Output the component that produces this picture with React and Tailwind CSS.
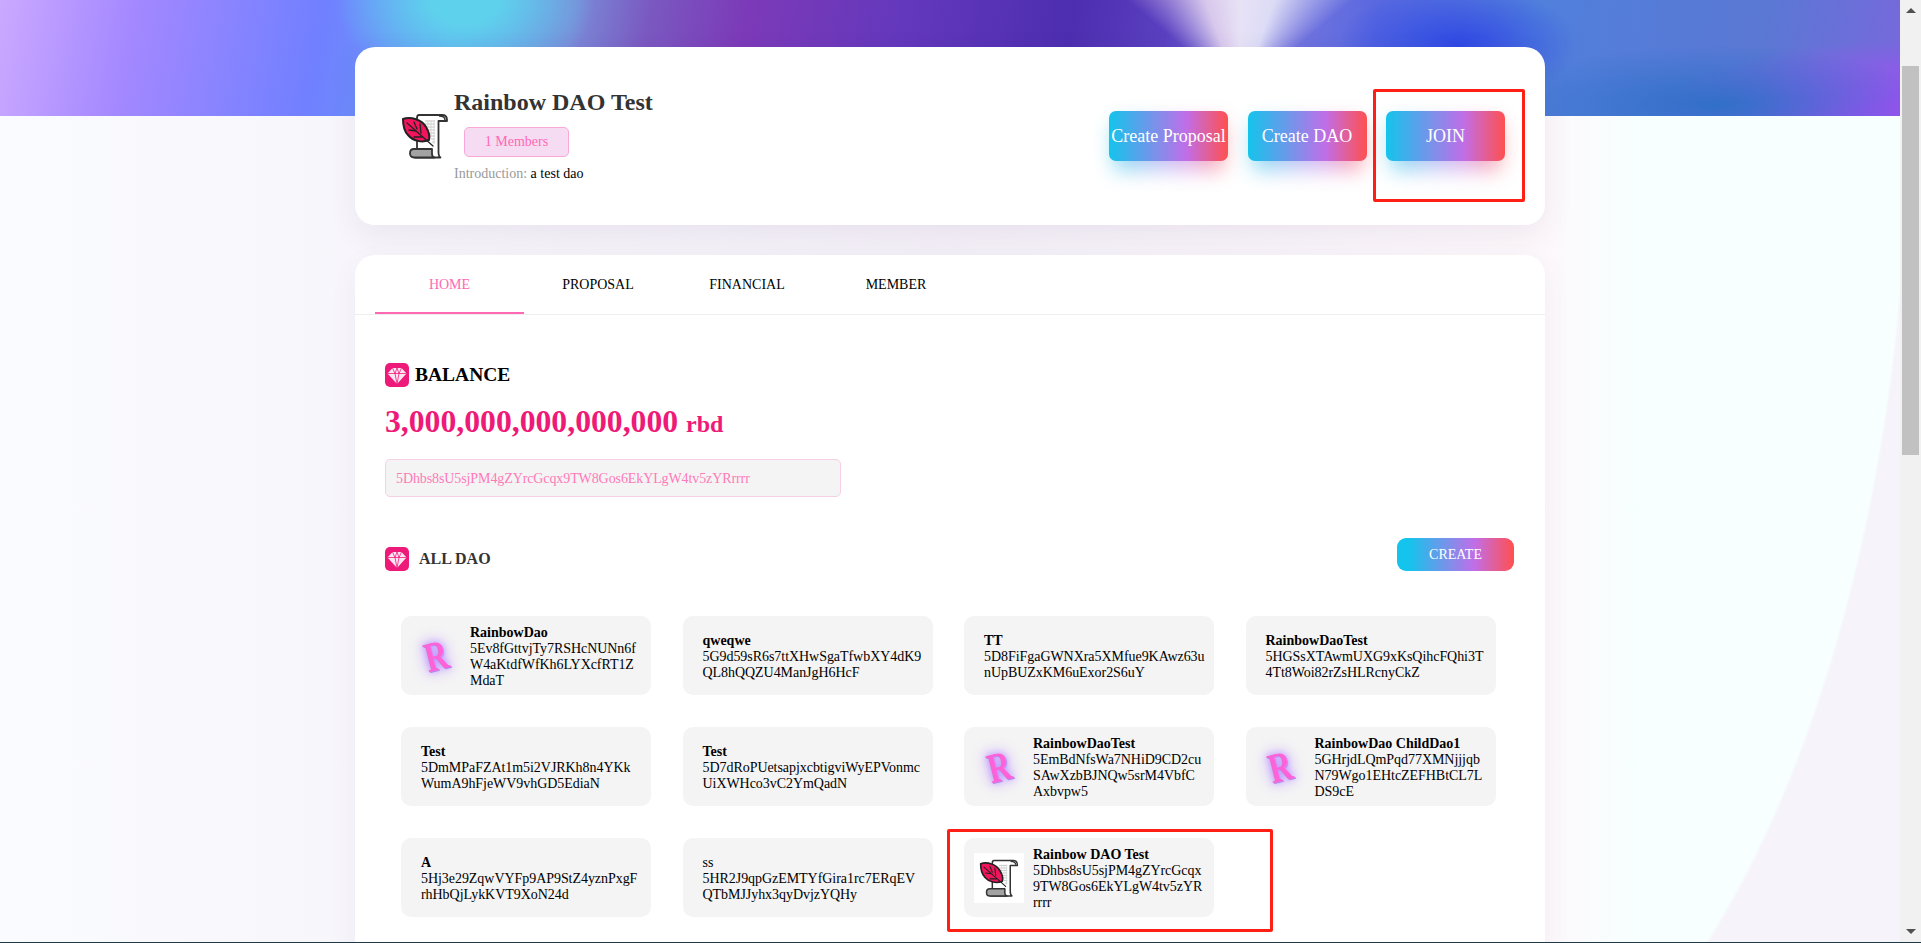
const serif = "font-['Liberation_Serif','Times_New_Roman',serif]";

function Feather({ className }) {
  return (
    <svg viewBox="0 0 60 60" className={className}>
      <path d="M24 9H47c3 0 5 2 5 5v1h-8.500V46c0 3 1 5 2 5.500H20V43h2V12c0-2 1-3 2-3z" fill="#fff" stroke="#333" strokeWidth="1.800" strokeLinejoin="round" />
      <path d="M44 10c3 0 6 1 6 4" fill="none" stroke="#333" strokeWidth="1.500" />
      <path d="M19 43H37v5c0 2 1 3 2.500 3.500H19c-2.500 0-4-1.800-4-4.200S16.500 43 19 43z" fill="#a3a3a3" stroke="#333" strokeWidth="1.800" strokeLinejoin="round" />
      <g stroke="#bdbdbd" strokeWidth="0.900">
        <path d="M30 15h10M29 18h11M31 21h9M32 24h8M33 27h7M34 30h6M36 33h4M37 36h3" />
        <path d="M33 14v8M36 14v16M39 14v24" stroke="#d5d5d5" />
      </g>
      <path d="M8 13C16 10 27 14 31 21c3 5 4 10 3 13-7 3-16 1-21-5-4-4-5-10-5-16z" fill="#f2145c" stroke="#222" strokeWidth="2" strokeLinejoin="round" />
      <path d="M12 17 38 40M19 16l3 7M25 18l1 9M14 24l7 1M19 31l8 0" fill="none" stroke="#222" strokeWidth="1.300" strokeLinecap="round" />
    </svg>
  );
}

function Gem({ className }) {
  return (
    <span className={`flex items-center justify-center rounded-[5px] bg-[#ee1a7a] ${className}`}>
      <svg viewBox="0 0 24 24" className="h-full w-full">
        <path d="M7.500 5h9l5 5.500L12 21 2.500 10.500z" fill="#fde6f1" />
        <path d="M2.500 10.500h19M7.500 5l2.500 5.500 2 10.500 2-10.500 2.500-5.500M10 10.500l2-5.500 2 5.500" fill="none" stroke="#ee1a7a" strokeWidth="0.800" />
      </svg>
    </span>
  );
}

function RainbowR() {
  return (
    <span className="flex h-[50px] w-[50px] shrink-0 items-center justify-center">
      <span className={`-rotate-[14deg] scale-x-75 text-[42px] font-bold leading-none text-[#ff62d6] ${serif} [text-shadow:0_0_8px_#b48aff,0_0_16px_#c9a5ff,0_0_22px_#d8c2ff,1px_1px_0_#a86ee8]`}>R</span>
    </span>
  );
}

function GradientButton({ children }) {
  return (
    <button className="relative block h-[50px] w-[119px] rounded-[7px] text-[18px] text-white">
      <span className="absolute inset-x-[4px] bottom-[-10px] top-[10px] rounded-[7px] bg-[linear-gradient(90deg,#14c4ec,#c06ee8_65%,#ff5050)] opacity-50 blur-[10px]" />
      <span className="absolute inset-0 flex items-center justify-center whitespace-nowrap rounded-[7px] bg-[linear-gradient(90deg,#14c4ec,#c06ee8_65%,#ff5050)]">{children}</span>
    </button>
  );
}

const daos = [
  { name: "RainbowDao", lines: ["5Ev8fGttvjTy7RSHcNUNn6f", "W4aKtdfWfKh6LYXcfRT1Z", "MdaT"], img: "r" },
  { name: "qweqwe", lines: ["5G9d59sR6s7ttXHwSgaTfwbXY4dK9", "QL8hQQZU4ManJgH6HcF"] },
  { name: "TT", lines: ["5D8FiFgaGWNXra5XMfue9KAwz63u", "nUpBUZxKM6uExor2S6uY"] },
  { name: "RainbowDaoTest", lines: ["5HGSsXTAwmUXG9xKsQihcFQhi3T", "4Tt8Woi82rZsHLRcnyCkZ"] },
  { name: "Test", lines: ["5DmMPaFZAt1m5i2VJRKh8n4YKk", "WumA9hFjeWV9vhGD5EdiaN"] },
  { name: "Test", lines: ["5D7dRoPUetsapjxcbtigviWyEPVonmc", "UiXWHco3vC2YmQadN"] },
  { name: "RainbowDaoTest", lines: ["5EmBdNfsWa7NHiD9CD2cu", "SAwXzbBJNQw5srM4VbfC", "Axbvpw5"], img: "r" },
  { name: "RainbowDao ChildDao1", lines: ["5GHrjdLQmPqd77XMNjjjqb", "N79Wgo1EHtcZEFHBtCL7L", "DS9cE"], img: "r" },
  { name: "A", lines: ["5Hj3e29ZqwVYFp9AP9StZ4yznPxgF", "rhHbQjLykKVT9XoN24d"] },
  { name: "ss", lines: ["5HR2J9qpGzEMTYfGira1rc7ERqEV", "QTbMJJyhx3qyDvjzYQHy"], thin: true },
  { name: "Rainbow DAO Test", lines: ["5Dhbs8sU5sjPM4gZYrcGcqx", "9TW8Gos6EkYLgW4tv5zYR", "rrrr"], img: "f", marked: true },
];

function DaoCard({ dao }) {
  return (
    <div className={`relative flex h-[79px] items-center rounded-[10px] bg-[#f4f4f4] text-[14px] leading-4 text-black ${dao.img ? "gap-[9px] pl-[10px] pr-[10px]" : "pl-[20px] pr-[10px]"}`}>
      {dao.img === "r" && <RainbowR />}
      {dao.img === "f" && (
        <span className="flex h-[50px] w-[50px] shrink-0 bg-white">
          <Feather className="h-[50px] w-[50px]" />
        </span>
      )}
      <div className="min-w-0 flex-1 whitespace-nowrap pt-[2px]">
        <div className={dao.thin ? "" : "font-bold"}>{dao.name}</div>
        {dao.lines.map((l) => <div key={l} className="tracking-[-0.05px]">{l}</div>)}
      </div>
      {dao.marked && <span className="absolute bottom-[-15px] left-[-17px] right-[-59px] top-[-9px] rounded-[2px] border-[3px] border-[#ff2015]" />}
    </div>
  );
}

export default function App() {
  return (
    <div className={`flex h-[943px] w-full flex-col overflow-hidden ${serif}`}>
      <div className="flex min-h-0 flex-1">
        <main className="min-w-0 flex-1 overflow-hidden bg-[linear-gradient(90deg,#fafbff_0px,#f6f3f9_570px,#f4f0f7_950px,#f8f3f9_1250px,#fdf8fb_1545px,transparent_1640px),radial-gradient(ellipse_510px_1059px_at_1400px_100px,#f7ffff_0%,#f7ffff_99.5%,transparent_100%),linear-gradient(90deg,#f6f4fa_0%,#f6f4fa_100%)]">
          <div className="h-[116px] bg-[conic-gradient(from_310deg_at_1240px_95px,transparent_0deg,#d8c8ec_30deg,#e8e2f6_50deg,#dcdcf6_70deg,transparent_100deg),radial-gradient(ellipse_120px_60px_at_1458px_45px,#2f48e4_0%,transparent_100%),radial-gradient(ellipse_220px_60px_at_1715px_105px,#3070c8_0%,transparent_100%),radial-gradient(ellipse_260px_85px_at_1905px_125px,#a04ff2_0%,#a04ff2_25%,transparent_100%),radial-gradient(ellipse_130px_90px_at_465px_0px,#5ed2ec_0%,#5ed2ec_25%,transparent_100%),linear-gradient(100deg,#cba9ff_0%,#a488ff_7%,#7080ff_17%,#68a0f4_24%,#7a8ad8_30%,#7a58c0_34%,#7c3ab8_39%,#6438bc_47%,#4d2eb0_56%,#5a40c0_61%,#7c78dc_66%,#5868e0_72%,#5080dc_80%,#5a78d4_92%,#7868dc_100%)]" />
          <div className="mx-auto -mt-[69px] w-[1190px]">
            <section className="flex h-[178px] items-center rounded-[20px] bg-white pl-[40px] pr-[40px] shadow-[0_10px_30px_rgba(80,50,120,0.08)]">
              <Feather className="h-[60px] w-[60px] shrink-0" />
              <div className="-ml-[1px] -mt-[3px]">
                <h1 className="text-[24px] font-bold leading-[28px] text-[#333]">Rainbow DAO Test</h1>
                <div className="ml-[10px] mt-[11px] flex h-[30px] w-[105px] items-center justify-center rounded-[5px] border border-[#f9a8d8] bg-[#f6dcf2] text-[14px] text-[#ff69b4]">1 Members</div>
                <p className="mt-[9px] text-[14px] leading-4 text-[#999]">Introduction: <span className="text-black">a test dao</span></p>
              </div>
              <div className="ml-auto flex gap-[19.500px]">
                <GradientButton>Create Proposal</GradientButton>
                <GradientButton>Create DAO</GradientButton>
                <div className="relative">
                  <GradientButton>JOIN</GradientButton>
                  <span className="absolute bottom-[-41px] left-[-13px] right-[-20px] top-[-22px] rounded-[2px] border-[3px] border-[#ff2015]" />
                </div>
              </div>
            </section>

            <section className="mt-[30px] h-[900px] rounded-[20px] bg-white shadow-[0_10px_30px_rgba(80,50,120,0.06)]">
              <nav className="flex h-[60px] border-b border-[#eeeeee] pl-[20px] text-[14px] text-black">
                <div className="flex h-[59px] w-[149px] items-center justify-center border-b-2 border-[#ff69b4] pt-[2px] text-[#ff69b4]">HOME</div>
                <div className="flex h-[59px] w-[149px] items-center justify-center pr-[1px]">PROPOSAL</div>
                <div className="flex h-[59px] w-[149px] items-center justify-center pr-[1px]">FINANCIAL</div>
                <div className="flex h-[59px] w-[149px] items-center justify-center pr-[1px]">MEMBER</div>
              </nav>
              <div className="px-[30px] pt-[48px]">
                <div className="flex h-[24px] items-center gap-[6px]">
                  <Gem className="h-[24px] w-[24px]" />
                  <h2 className="text-[19.500px] font-bold text-black">BALANCE</h2>
                </div>
                <div className="mt-[17px] flex h-[37px] items-baseline font-bold leading-[36px] text-[#ee1a77]">
                  <span className="text-[31.700px]">3,000,000,000,000,000</span>
                  <span className="ml-[8px] text-[24px]">rbd</span>
                </div>
                <div className="mt-[18px] flex h-[38px] w-[456px] items-center rounded-[5px] border border-[#f8d0e4] bg-[#f4f4f4] pl-[10px] text-[14px] tracking-[-0.1px] text-[#ff7ab8]">5Dhbs8sU5sjPM4gZYrcGcqx9TW8Gos6EkYLgW4tv5zYRrrrr</div>
                <div className="mt-[41px] flex h-[33px] items-start">
                  <div className="mt-[9px] flex items-center">
                    <Gem className="h-[24px] w-[24px]" />
                    <h2 className="ml-[10px] text-[16px] font-bold text-[#333]">ALL DAO</h2>
                  </div>
                  <button className="ml-auto mr-[1px] h-[33px] w-[117px] rounded-[9px] bg-[linear-gradient(90deg,#14c4ec_10%,#c06ee8_66%,#ff5050)] text-[14px] text-white">CREATE</button>
                </div>
                <div className="mt-[45px] grid grid-cols-[repeat(4,250px)] gap-x-[31.500px] gap-y-[32px] pl-[16px]">
                  {daos.map((d) => <DaoCard key={d.lines[0]} dao={d} />)}
                </div>
              </div>
            </section>
          </div>
        </main>
        <aside className="flex w-[21px] shrink-0 flex-col bg-[#f1f1f1]">
          <div className="flex h-[21px] items-center justify-center">
            <span className="h-0 w-0 border-x-[5px] border-b-[5px] border-x-transparent border-b-[#505050]" />
          </div>
          <div className="ml-[2px] mt-[45px] h-[389px] w-[17px] bg-[#c1c1c1]" />
          <div className="mt-auto flex h-[21px] items-center justify-center">
            <span className="h-0 w-0 border-x-[5px] border-t-[5px] border-x-transparent border-t-[#505050]" />
          </div>
        </aside>
      </div>
      <div className="h-px shrink-0 bg-[#1c3a48]" />
    </div>
  );
}
